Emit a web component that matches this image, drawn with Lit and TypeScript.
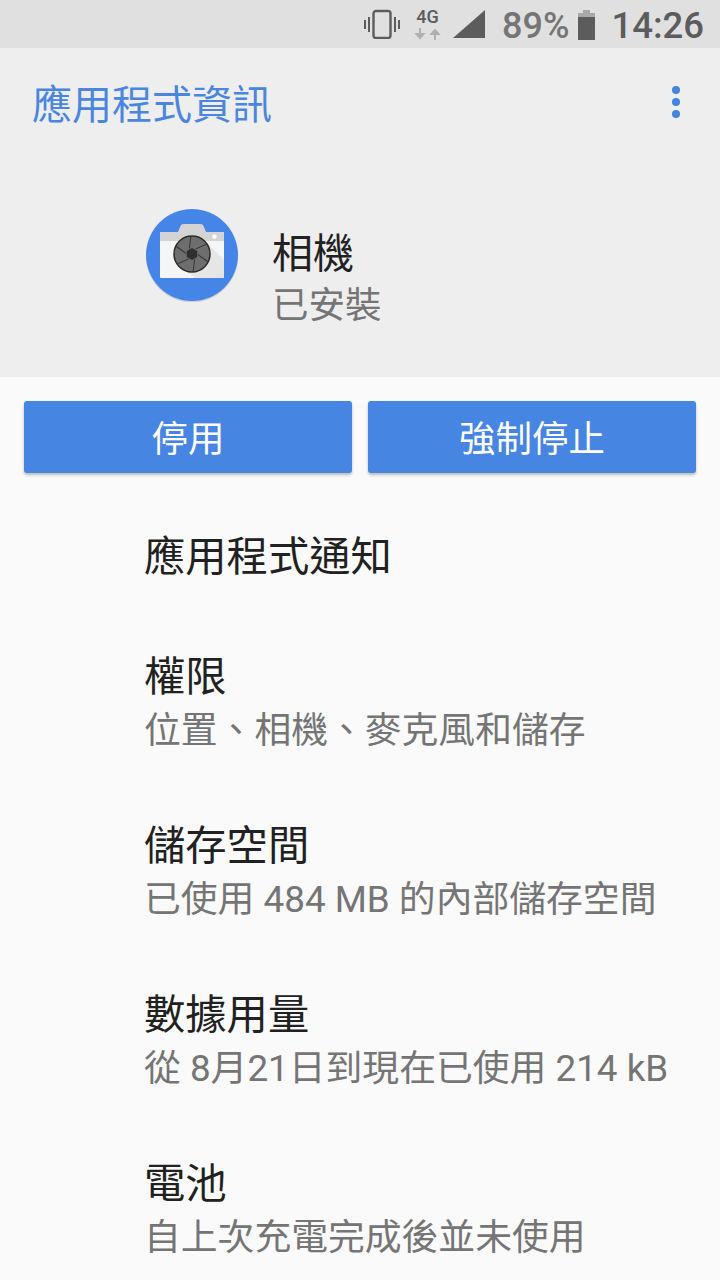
import { LitElement, html, css, svg } from "lit";
import { customElement } from "lit/decorators.js";

const rows: [string, string | null][] = [
  ["應用程式通知", null],
  ["權限", "位置、相機、麥克風和儲存"],
  ["儲存空間", "已使用 484 MB 的內部儲存空間"],
  ["數據用量", "從 8月21日到現在已使用 214 kB"],
  ["電池", "自上次充電完成後並未使用"],
];

const blades = [0, 60, 120, 180, 240, 300].map(
  (a) => svg`<line x1="3.500" y1="-5" x2="15" y2="-10" stroke="#333" stroke-width="1" transform="rotate(${a})"/>`
);

@customElement("app-root")
export class AppRoot extends LitElement {
  static styles = css`
    :host {
      display: block;
      width: 720px;
      height: 1280px;
      overflow: hidden;
      background: #fafafa;
      font-family: Roboto, "Noto Sans CJK TC", sans-serif;
    }
    .status {
      height: 48px;
      background: #e0e0e0;
      display: flex;
      align-items: center;
      justify-content: flex-end;
      color: #5c5c5c;
    }
    .status svg { display: block; flex: none; }
    .vib { margin-right: 13px; }
    .net { margin-right: 11px; }
    .sig { margin-right: 17px; }
    .pct { font-size: 36px; line-height: 48px; color: #757575; font-weight: 500; margin-right: 9px; position: relative; top: 2px; }
    .bat { margin-right: 16px; position: relative; top: 1px; }
    .time { font-size: 36.500px; line-height: 48px; font-weight: 500; margin-right: 16px; position: relative; top: 2px; }
    .head {
      height: 329px;
      background: #eeeeee;
      display: flex;
      flex-direction: column;
    }
    .bar {
      height: 112px;
      padding-left: 32px;
      padding-bottom: 4px;
      box-sizing: border-box;
      display: flex;
      align-items: center;
      justify-content: space-between;
      color: #4a86e0;
      font-size: 40px;
      flex: none;
    }
    .dots { display: flex; flex-direction: column; gap: 4px; margin-right: 40px; }
    .dots i { width: 8px; height: 8px; border-radius: 50%; background: #4484e0; display: block; }
    .app {
      display: flex;
      padding: 48px 0 0 145px;
      align-items: flex-start;
    }
    .icon { width: 94px; height: 94px; flex: none; margin-right: 33px; display: block; }
    .name { font-size: 41px; line-height: 50px; color: #212121; margin-top: 21px; }
    .state { font-size: 36.500px; line-height: 50px; color: #757575; margin-top: 2px; }
    .btns {
      display: flex;
      gap: 16px;
      padding: 24px 24px 0;
    }
    .btn {
      flex: 1;
      height: 72px;
      padding-bottom: 1px;
      box-sizing: border-box;
      background: #4685e1;
      color: #fff;
      font-size: 36.500px;
      border-radius: 3px;
      box-shadow: 0 2px 3px rgba(0,0,0,0.25);
      display: flex;
      align-items: center;
      justify-content: center;
    }
    .list { padding: 58px 0 0 144px; }
    .row { height: 169px; }
    .row.first { height: 120px; }
    .t { font-size: 41.300px; line-height: 52px; color: #212121; white-space: nowrap; }
    .s { font-size: 36.800px; line-height: 52px; color: #757575; white-space: nowrap; margin-top: 2px; }
  `;

  render() {
    return html`
      <div class="status">
        <svg class="vib" width="36" height="30" viewBox="0 0 36 30" fill="none" stroke="#5c5c5c">
          <rect x="9.500" y="2" width="17" height="27" rx="2.500" stroke-width="2.400"/>
          <path d="M5 8v15M1 11v9M31 8v15M35 11v9" stroke-width="2"/>
        </svg>
        <svg class="net" width="29" height="40" viewBox="0 -4 29 40">
          <path d="M7 20v9M3.500 26l3.500 4 3.500-4z" fill="#b0b0b0" stroke="#b0b0b0" stroke-width="2"/>
          <path d="M22 32v-9M18.500 26l3.500-4 3.500 4z" fill="#b0b0b0" stroke="#b0b0b0" stroke-width="2"/>
          <text x="14.500" y="15" text-anchor="middle" font-size="18" font-weight="500" fill="#5c5c5c" font-family="Roboto">4G</text>
        </svg>
        <svg class="sig" width="32" height="30" viewBox="0 0 32 30"><path d="M32 1v28H0z" fill="#5c5c5c"/></svg>
        <span class="pct">89%</span>
        <svg class="bat" width="17" height="30" viewBox="0 0 17 30">
          <path d="M5 0h7v3H5zM0 3h17v5H0z" fill="#a8a8a8"/>
          <rect y="7" width="17" height="23" fill="#5c5c5c"/>
        </svg>
        <span class="time">14:26</span>
      </div>
      <div class="head">
        <div class="bar">
          <span>應用程式資訊</span>
          <div class="dots"><i></i><i></i><i></i></div>
        </div>
        <div class="app">
          <svg class="icon" viewBox="0 0 94 94">
            <circle cx="47" cy="48.500" r="46" fill="#000" opacity=".12"/>
            <circle cx="47" cy="47" r="46" fill="#4685e8"/>
            <path d="M33 24l2.500-6q1-2 3-2h17q2 0 3 2l2.500 6z" fill="#d4d4d4"/>
            <rect x="15" y="24" width="64" height="46" rx="1" fill="#f5f5f5"/>
            <path d="M15 25q0-1 1-1h62q1 0 1 1v8H15z" fill="#d4d4d4"/>
            <circle cx="69.500" cy="28.500" r="2.200" fill="#fff"/>
            <path d="M60 33l19 19v17q0 1-1 1H50L34 58z" fill="#e6e6e6"/>
            <g transform="translate(47 46)">
              <circle r="18" fill="#6e6e6e" stroke="#2d2d2d" stroke-width="1.500"/>
              ${blades}
              <path d="M0-6L5.200-3V3L0 6L-5.200 3V-3z" fill="#2f2f2f"/>
            </g>
          </svg>
          <div>
            <div class="name">相機</div>
            <div class="state">已安裝</div>
          </div>
        </div>
      </div>
      <div class="btns">
        <div class="btn">停用</div>
        <div class="btn">強制停止</div>
      </div>
      <div class="list">
        ${rows.map(
          ([t, s], i) => html`<div class="row ${i === 0 ? "first" : ""}">
            <div class="t">${t}</div>
            ${s ? html`<div class="s">${s}</div>` : null}
          </div>`
        )}
      </div>
    `;
  }
}
